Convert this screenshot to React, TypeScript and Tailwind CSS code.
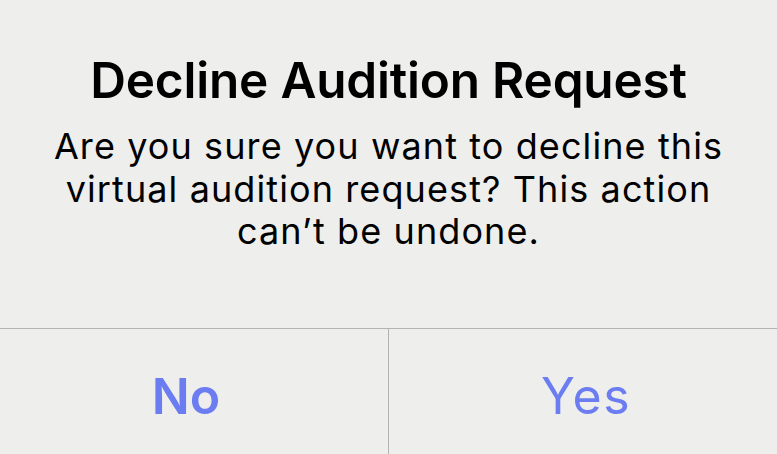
import React from 'react';

export default function App() {
  return (
    <div className="h-[454px] w-[777px] overflow-hidden bg-[#eeeeed] font-['Inter',sans-serif] antialiased">
      <div className="flex h-[328px] flex-col items-center pt-[50px]">
        <h1 className="text-[49.5px] font-semibold leading-[60px] tracking-[-0.2px] text-black">
          Decline Audition Request
        </h1>
        <p className="mt-[15px] text-center text-[36px] leading-[42.5px] tracking-[1.1px] text-black">
          Are you sure you want to decline this
          <br />
          virtual audition request? This action
          <br />
          can’t be undone.
        </p>
      </div>
      <div className="flex h-[136px] border-t border-[#b3b3b3]">
        <button className="flex w-[389px] items-center justify-center border-r border-[#b3b3b3] text-[50px] font-semibold text-[#6b7df0]">
          <span className="mr-[16px]">No</span>
        </button>
        <button className="flex flex-1 items-center justify-center text-[50px] font-normal tracking-[1.5px] text-[#6b7df0]">
          <span className="ml-[6px]">Yes</span>
        </button>
      </div>
    </div>
  );
}
